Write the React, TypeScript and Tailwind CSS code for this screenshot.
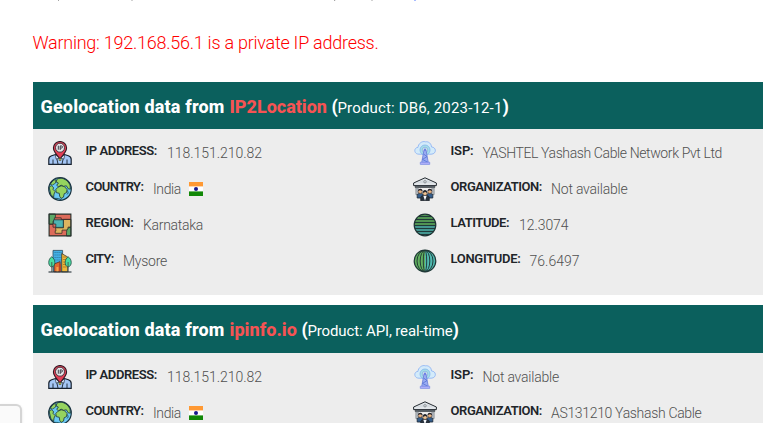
import { useLayoutEffect, useRef, useState, type ReactNode } from "react";

type FitProps = { children: string; width: number; className?: string };

/* Text whose letter spacing is adjusted so that the line takes the given width. */
function Fit({ children, width, className = "" }: FitProps) {
  const ref = useRef<HTMLSpanElement>(null);
  const [spacing, setSpacing] = useState(0);
  useLayoutEffect(() => {
    const el = ref.current;
    if (!el) return;
    el.style.letterSpacing = "0px";
    const natural = el.getBoundingClientRect().width;
    const value = (width - natural) / children.length;
    el.style.letterSpacing = `${value}px`;
    setSpacing(value);
  }, [children, width]);
  return (
    <span ref={ref} className={`inline-block shrink-0 whitespace-nowrap ${className}`} style={{ letterSpacing: `${spacing}px` }}>
      {children}
    </span>
  );
}

function PinPerson() {
  return (
    <svg viewBox="0 0 24 24" className="h-6 w-6">
      <path d="M.8 23.4v-5.1c0-1.8 1-2.9 2.8-3.5l4-1.3h8.8l4 1.3c1.8.6 2.8 1.7 2.8 3.5v5.1z" fill="#a4c6f5" stroke="#17212e" strokeWidth="1.2" />
      <path d="M5 18.5v4.7M19 18.5v4.7M8 14l2 9M16 14l-2 9" stroke="#17212e" strokeWidth=".9" fill="none" />
      <path d="M7.3 13.4l4.7 4.2 4.7-4.2-.7 4.5-3.2-.5-.8.9-.8-.9-3.2.5z" fill="#d5e5fb" stroke="#17212e" strokeWidth=".6" />
      <path d="M12 17.8C9.2 14.5 5.4 10.5 5.4 6.9a6.6 6.4 0 0 1 13.2 0c0 3.6-3.8 7.6-6.6 10.9z" fill="#e13f55" stroke="#301c26" strokeWidth="1.1" />
      <circle cx="12" cy="6.7" r="4.5" fill="#e4e4e8" stroke="#40272f" strokeWidth=".9" />
      <path d="M10.3 4.7v4M12.2 9V4.9h1.1c1.6 0 1.6 2.2 0 2.2h-1" fill="none" stroke="#262c36" strokeWidth=".9" />
      <path d="M11 17.5h2v2h-2z" fill="#c9c63d" stroke="#3a412e" strokeWidth=".5" />
    </svg>
  );
}

function Globe() {
  return (
    <svg viewBox="0 0 24 24" className="h-6 w-6">
      <circle cx="12" cy="12" r="11.2" fill="#6bc8f4" />
      <path d="M9.2 1.8 14 1l5 2.5 3 4.2.4 4.5-2.2-.4-1.8-3-3 .6-2.3-1.3-2.6 1.7-1.8-1.5 1.7-2.3-2.3-1z" fill="#95d35f" stroke="#1d3533" strokeWidth=".8" />
      <path d="M10 10.2l3.2-1.4 3.2.8 2.6 2.8-.5 3.3-2.3 1-.7 3.4-2.5 1.4-1.3-2.2-.4-3-3-.7-.5-3.1z" fill="#95d35f" stroke="#1d3533" strokeWidth=".8" />
      <path d="M1.1 10.2l2.2-1.5 2.2 1.8-.4 2 2.1 2.1-1.2 2.4-.4 3.5-2.8-3.2z" fill="#95d35f" stroke="#1d3533" strokeWidth=".8" />
      <path d="M2.2 7.2l3.2-4.1 2.5-.4-.4 3.4-3.1 2z" fill="#95d35f" stroke="#1d3533" strokeWidth=".7" />
      <path d="M19.5 13.5l.7 2.5-1.2 1.5M6 21.3l4.5.2 3 1.4" fill="none" stroke="#1d5260" strokeWidth=".9" />
      <circle cx="12" cy="12" r="11.3" fill="none" stroke="#1b3542" strokeWidth="1.2" />
    </svg>
  );
}

function Region() {
  return (
    <svg viewBox="0 0 24 24" className="h-6 w-6">
      <path d="M1 1h22v22H1z" fill="#dd6b5a" />
      <path d="M1 1h6.4v3.8h-1v3.4H5v3H1z" fill="#5ca967" stroke="#29362f" strokeWidth=".8" />
      <path d="M7.5 14.8h8V6.4H23v7.7h-3v3h-6v3.2H7.2v-2.5h.8z" fill="#ddb45f" stroke="#3a332a" strokeWidth=".8" />
      <path d="M5.6 6.8h9.7v7.6H7.8V11H5.6z" fill="#4fb4b2" stroke="#24383a" strokeWidth=".8" />
      <path d="M23 14.2c-3.2.2-4.5 2.5-4.5 5.5V23H23z" fill="#5ca967" stroke="#29362f" strokeWidth=".8" />
      <path d="M7.4 4.8h5.8v1.6H23M1 11.2h4v3h3" fill="none" stroke="#3a2828" strokeWidth=".8" />
      <path d="M1.1 1.1h21.8v21.8H1.1z" fill="none" stroke="#27332f" strokeWidth="1.1" />
    </svg>
  );
}

function City() {
  return (
    <svg viewBox="0 0 24 24" className="h-6 w-6">
      <path d="M5 1.4h9.6v21H5z" fill="#43afe5" stroke="#294b60" strokeWidth=".8" />
      <path d="M6.5 3.5h7M6.5 6h7M6.5 8.5h7M6.5 11h7" stroke="#246788" strokeWidth=".7" strokeDasharray="1.2 .8" />
      <path d="M13.7 4.5 19.7 8v14.8h-6z" fill="#edb739" stroke="#3c3b30" strokeWidth=".8" />
      <path d="M15 8h3.5M15 10.5h3.5M15 13h3.5M15 15.5h3.5M15 18h3.5" stroke="#9e6b24" strokeWidth=".7" />
      <path d="M6.1 22.8V15l6-2.4v10.2z" fill="#e2682f" stroke="#542d25" strokeWidth=".8" />
      <path d="M8.4 22.8V18h2v4.8z" fill="#f7a146" />
      <path d="M11 14l2 1.2v7.6h-2z" fill="#b4472a" />
      <path d="M3.7 7.8c4 2.2 4.4 9.2 0 10.2C-.5 17 0 10 3.7 7.8zM20.1 7.8c4 2.2 4.4 9.2 0 10.2-4.1-1-3.7-8 0-10.2z" fill="#48dca0" stroke="#234d45" strokeWidth=".8" />
      <path d="M3.8 13v10M20.1 13v10" fill="none" stroke="#46534a" strokeWidth=".9" />
      <path d="M.5 23h23" stroke="#263239" strokeWidth="1.1" />
    </svg>
  );
}

function Tower() {
  return (
    <svg viewBox="0 0 24 24" className="h-6 w-6">
      <path d="M6 13.2C.6 13.2.6 6.5 5 6.4 5.2 2.8 9 -.4 12.4.8c3.6-.6 6 2.2 6.1 5.2 5.2.1 5.2 7.2-.4 7.2z" fill="#d3ebfa" stroke="#91b5f4" strokeWidth=".9" />
      <circle cx="12" cy="9" r="5" fill="#a5e0e6" stroke="#84b2ee" strokeWidth=".8" />
      <circle cx="12" cy="9" r="2.8" fill="#d2ede5" stroke="#7fa5e8" strokeWidth=".7" />
      <path d="M11 9h2l2.3 12.5H8.7z" fill="#9aacf2" stroke="#667bd8" strokeWidth=".8" />
      <path d="m10.6 13 3.4 2.6-4.5 2.8 5.2 2.8" fill="none" stroke="#5572d4" strokeWidth=".8" />
      <circle cx="12" cy="8.8" r="1.2" fill="#717ee7" />
      <path d="M7.3 21.2h9.4v2.2H7.3z" fill="#b3b2fa" stroke="#7387e2" strokeWidth=".7" />
    </svg>
  );
}

function Institution() {
  return (
    <svg viewBox="0 0 24 24" className="h-6 w-6">
      <path d="M.6 6 12 .8 23.4 6v2.6H.6z" fill="#e2e6ea" stroke="#252b31" strokeWidth="1" />
      <path d="M3.5 6 12 2.3 20.5 6z" fill="#d5dbe0" />
      <circle cx="12" cy="4.8" r="1.2" fill="#eef0f2" stroke="#535c63" strokeWidth=".6" />
      <path d="M2.2 8.8h19.6v1.7H2.2z" fill="#5f686f" stroke="#292e34" strokeWidth=".6" />
      <path d="M3 10.7h2v7H3zM19 10.7h2v7h-2z" fill="#d6dbe0" stroke="#535c63" strokeWidth=".7" />
      <path d="M4.2 21v-2.6c0-1.2 1.2-2 3.2-2s3 .8 3 2V21zM13.6 21v-2.6c0-1.2 1-2 3-2s3.2.8 3.2 2V21z" fill="#345e8c" stroke="#1b2633" strokeWidth=".8" />
      <circle cx="7.2" cy="14.4" r="2" fill="#eeb782" stroke="#30272a" strokeWidth=".5" />
      <circle cx="16.8" cy="14.4" r="2" fill="#eeb782" stroke="#30272a" strokeWidth=".5" />
      <path d="M5 14c0-3 4.5-3 4.5 0L7 13.3zM14.6 14c0-3 4.5-3 4.5 0L17 13.3z" fill="#27252b" />
      <path d="M7.7 23.7v-3c0-1.6 1.7-2.2 4.3-2.2s4.3.6 4.3 2.2v3z" fill="#29333e" stroke="#171d24" strokeWidth=".7" />
      <path d="m10.3 18.8 1.7 4.9 1.7-4.9z" fill="#f5f6fa" />
      <circle cx="12" cy="16.3" r="2.2" fill="#f0c391" stroke="#2f2d30" strokeWidth=".6" />
      <path d="M9.6 16c0-4 4.8-4 4.8 0l-2-1z" fill="#282b31" />
    </svg>
  );
}

function Latitude() {
  return (
    <svg viewBox="0 0 24 24" className="h-6 w-6">
      <circle cx="12" cy="12" r="10.8" fill="#4fb6ae" />
      <path d="M1.2 12a10.8 10.8 0 0 1 21.6 0z" fill="#62b35c" />
      <path d="M6 3.5h12M3 6.5h18M1.7 9.5h20.6M1.2 12.5h21.6M1.9 15.5h20.2M3.2 18.5h17.6M6 21.3h12" stroke="#203a39" strokeWidth="1.3" />
      <circle cx="12" cy="12" r="10.8" fill="none" stroke="#203334" strokeWidth="1.2" />
    </svg>
  );
}

function Longitude() {
  return (
    <svg viewBox="0 0 24 24" className="h-6 w-6">
      <circle cx="12" cy="12" r="10.8" fill="#50b9af" />
      <path d="M12 1.2a10.8 10.8 0 0 0 0 21.6z" fill="#62b05f" />
      <g fill="none" stroke="#203837" strokeWidth=".95">
        <ellipse cx="12" cy="12" rx="8" ry="10.7" />
        <ellipse cx="12" cy="12" rx="4.8" ry="10.7" />
        <ellipse cx="12" cy="12" rx="1.7" ry="10.7" />
        <circle cx="12" cy="12" r="10.8" strokeWidth="1.2" />
      </g>
    </svg>
  );
}

function Flag() {
  return (
    <svg viewBox="0 0 14 14" className="ml-2 h-3.5 w-3.5 self-center">
      <path d="M0 0h14v14H0z" fill="#fff" />
      <path d="M0 0h14v4.4H0z" fill="#ff9933" />
      <path d="M0 9.4h14V14H0z" fill="#128807" />
      <circle cx="7" cy="7" r="2" fill="#18188c" />
    </svg>
  );
}

type RowProps = { icon: ReactNode; label: string; labelWidth: number; value: string; valueWidth: number; gap?: string; children?: ReactNode };

function Row({ icon, label, labelWidth, value, valueWidth, gap = "ml-2.5", children }: RowProps) {
  return (
    <div className="flex h-9 items-start">
      {icon}
      <div className="ml-[13.5px] flex h-6 items-start">
        <Fit width={labelWidth} className="text-[13px] leading-5 font-semibold text-[#212529]">{label}</Fit>
        <Fit width={valueWidth} className={`${gap} pt-px text-[14px] leading-[22px] font-light text-[#505050]`}>{value}</Fit>
        {children}
      </div>
    </div>
  );
}

type PanelProps = {
  source: string;
  sourceWidth: number;
  product: string;
  productWidth: number;
  headerHeight: string;
  left: ReactNode;
  right: ReactNode;
};

function Panel({ source, sourceWidth, product, productWidth, headerHeight, left, right }: PanelProps) {
  return (
    <section className="h-[213px] bg-[#ededed]">
      <h2 className={`flex items-center bg-[#0b605d] pl-[7.5px] pt-px text-[18px] font-extrabold text-white ${headerHeight}`}>
        <span className="flex items-baseline">
          <Fit width={184}>Geolocation data from</Fit>
          <Fit width={sourceWidth} className="ml-[5px] text-[#f65353]">{source}</Fit>
          <Fit width={6} className="ml-[4.5px]">(</Fit>
          <Fit width={productWidth} className="text-[15px] font-normal">{product}</Fit>
          <Fit width={6}>)</Fit>
        </span>
      </h2>
      <div className="grid grid-cols-2 pt-3 pl-[15px]">
        <div>{left}</div>
        <div className="pl-[7.5px]">{right}</div>
      </div>
    </section>
  );
}

export default function App() {
  return (
    <main className="relative h-[423px] w-[777px] overflow-hidden bg-white font-[Roboto,sans-serif]">
      <svg viewBox="0 0 777 1" className="block h-px w-full">
        <path d="M58 0h1v1h-1zM131.5 0h1v1h-1zM334 0h1.2v1H334zM371.5 0h1v1h-1z" fill="#a6a6a6" />
        <path d="M414 0h2v1h-2z" fill="#a9bcff" />
      </svg>
      <p className="flex h-[81px] pt-[30px] pl-[32.5px] text-[18px] leading-6 font-light text-[#ff0000]">
        <Fit width={346}>Warning: 192.168.56.1 is a private IP address.</Fit>
      </p>
      <div className="ml-[33px] flex w-[730px] flex-col gap-2.5">
        <Panel
          source="IP2Location"
          sourceWidth={97.5}
          product="Product: DB6, 2023-12-1"
          productWidth={165}
          headerHeight="h-[47px]"
          left={
            <>
              <Row icon={<PinPerson />} label="IP ADDRESS:" labelWidth={71.5} value="118.151.210.82" valueWidth={95} />
              <Row icon={<Globe />} label="COUNTRY:" labelWidth={58} value="India" valueWidth={28} gap="ml-[9.5px]">
                <Flag />
              </Row>
              <Row icon={<Region />} label="REGION:" labelWidth={48} value="Karnataka" valueWidth={60} gap="ml-[9.5px]" />
              <Row icon={<City />} label="CITY:" labelWidth={28} value="Mysore" valueWidth={44} gap="ml-[9.5px]" />
            </>
          }
          right={
            <>
              <Row icon={<Tower />} label="ISP:" labelWidth={23} value="YASHTEL Yashash Cable Network Pvt Ltd" valueWidth={239.5} gap="ml-[9px]" />
              <Row icon={<Institution />} label="ORGANIZATION:" labelWidth={91.5} value="Not available" valueWidth={76.5} gap="ml-[9px]" />
              <Row icon={<Latitude />} label="LATITUDE:" labelWidth={58.5} value="12.3074" valueWidth={49.5} gap="ml-[10px]" />
              <Row icon={<Longitude />} label="LONGITUDE:" labelWidth={70} value="76.6497" valueWidth={50} gap="ml-[9px]" />
            </>
          }
        />
        <Panel
          source="ipinfo.io"
          sourceWidth={67.5}
          product="Product: API, real-time"
          productWidth={145}
          headerHeight="h-12"
          left={
            <>
              <Row icon={<PinPerson />} label="IP ADDRESS:" labelWidth={71.5} value="118.151.210.82" valueWidth={95} />
              <Row icon={<Globe />} label="COUNTRY:" labelWidth={58} value="India" valueWidth={28} gap="ml-[9.5px]">
                <Flag />
              </Row>
            </>
          }
          right={
            <>
              <Row icon={<Tower />} label="ISP:" labelWidth={23} value="Not available" valueWidth={76.5} gap="ml-[9px]" />
              <Row icon={<Institution />} label="ORGANIZATION:" labelWidth={91.5} value="AS131210 Yashash Cable" valueWidth={150.5} gap="ml-[9px]" />
            </>
          }
        />
      </div>
      <div className="absolute -bottom-2 left-0 h-[27px] w-[22px] rounded-tr-md border-t-2 border-r-2 border-[#d5d5d5] bg-[#fafafa] shadow-sm" />
    </main>
  );
}
